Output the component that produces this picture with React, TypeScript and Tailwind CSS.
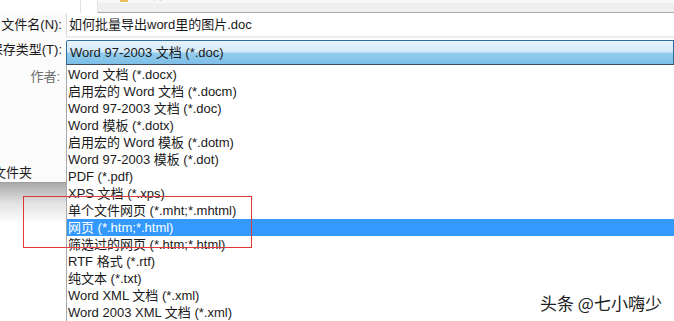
import React from "react";

const items = [
  "Word 文档 (*.docx)",
  "启用宏的 Word 文档 (*.docm)",
  "Word 97-2003 文档 (*.doc)",
  "Word 模板 (*.dotx)",
  "启用宏的 Word 模板 (*.dotm)",
  "Word 97-2003 模板 (*.dot)",
  "PDF (*.pdf)",
  "XPS 文档 (*.xps)",
  "单个文件网页 (*.mht;*.mhtml)",
  "网页 (*.htm;*.html)",
  "筛选过的网页 (*.htm;*.html)",
  "RTF 格式 (*.rtf)",
  "纯文本 (*.txt)",
  "Word XML 文档 (*.xml)",
  "Word 2003 XML 文档 (*.xml)",
];

export default function App() {
  return (
    <div
      className="relative w-[674px] h-[321px] overflow-hidden bg-white text-[13px] text-[#1a1a1a]"
      style={{ fontFamily: '"Liberation Sans", "Noto Sans CJK SC", sans-serif' }}
    >
      {/* top strip of file list */}
      <div className="flex h-[13px]">
        <div className="w-[81px] bg-white border-r border-[#e2e2e2]" />
        <div className="w-[17px] bg-white border-r border-[#e2e2e2]" />
        <div className="flex-1 relative overflow-hidden bg-[#efefef] border-b border-[#a8a8a8]">
          <div className="h-[3px] bg-[#f8f8f8]" />
          <div className="absolute left-[22px] top-[-6px] w-[8px] h-[8px] bg-[#e8c05a]" />
          <div className="absolute left-[40px] top-[-15px] leading-[17px] text-[#333]">内容</div>
          <div className="absolute left-[249px] top-[-15px] leading-[17px] text-[#6d6d6d]">文件夹</div>
          <div className="absolute left-[367px] top-[-15px] leading-[17px] text-[#6d6d6d]">2020/2/18 10:11</div>
        </div>
      </div>

      <div className="flex">
        {/* left labels */}
        <div className="w-[66px] flex flex-col">
          <div className="bg-[#fbfbfb] h-[170px] flex flex-col border-b border-[#a0a0a0]">
            <div className="h-[25px] flex items-center justify-end pr-[4px] whitespace-nowrap">文件名(N):</div>
            <div className="h-[27px] flex items-center justify-end pr-[4px] whitespace-nowrap">保存类型(T):</div>
            <div className="h-[29px] flex items-center justify-end pr-[6px] text-[#6d6d6d] whitespace-nowrap">作者:</div>
            <div className="h-[74px]" />
            <div className="h-[20px] flex items-center whitespace-nowrap ml-[-33px]">隐藏文件夹</div>
          </div>
          <div className="h-[40px] bg-gradient-to-b from-[#a9a9a9] via-[#e2e2e2] to-white" />
        </div>

        {/* right column */}
        <div className="flex-1 flex flex-col">
          <div className="h-[25px] bg-white border-l border-[#d9d9d9] border-b-2 border-b-[#ececec] flex items-center pl-[2px] whitespace-nowrap">
            如何批量导出word里的图片.doc
          </div>
          <div className="h-[2px] bg-white" />
          <div
            className="h-[25px] border border-[#2f6e9e] border-b-[#3f4c58] rounded-tl-[2px] flex items-center pl-[3px] whitespace-nowrap"
            style={{
              background:
                "linear-gradient(to bottom, #e7f3fc 0%, #d3e9f8 48%, #95cdee 52%, #7cbee6 100%)",
            }}
          >
            Word 97-2003 文档 (*.doc)
          </div>
          <div className="flex flex-col border-l border-[#a8a8a8] bg-white pt-[1px]">
            {items.map((t, i) => (
              <div
                key={t}
                className={
                  i === 9
                    ? "h-[17px] leading-[17px] pl-[1px] whitespace-nowrap bg-[#3399ff] text-white"
                    : "h-[17px] leading-[17px] pl-[1px] whitespace-nowrap"
                }
              >
                {t}
              </div>
            ))}
          </div>
        </div>
      </div>

      {/* red annotation box */}
      <div className="absolute left-[23px] top-[196px] w-[229px] h-[52px] border-[1.5px] border-[#e0393b]" />

      {/* watermark */}
      <div
        className="absolute left-[540px] top-[292px] text-[17px] leading-[22px] text-[#222] whitespace-nowrap"
        style={{
          fontFamily: '"Noto Sans CJK SC", sans-serif',
          textShadow: "1px 1px 0 #fff, -1px -1px 0 #fff, 1px -1px 0 #fff, -1px 1px 0 #fff",
        }}
      >
        头条 @七小嗨少
      </div>
    </div>
  );
}
